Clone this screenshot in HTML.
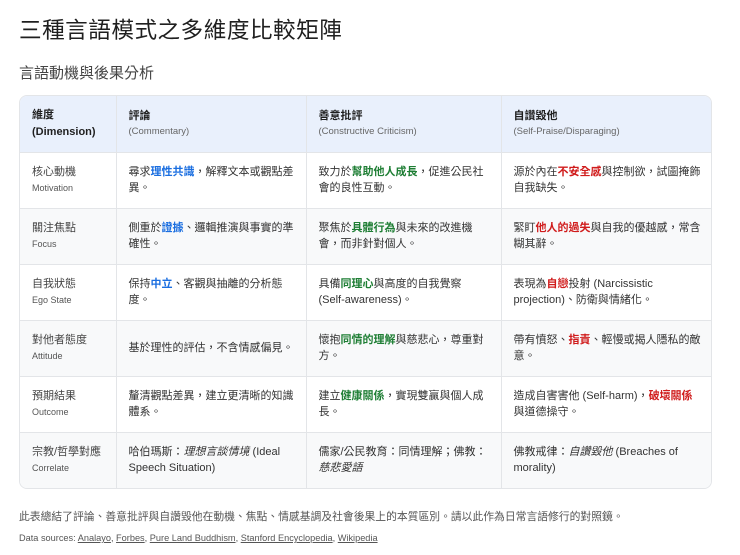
<!DOCTYPE html>
<html><head><meta charset="utf-8"><style>
*{margin:0;padding:0;box-sizing:border-box}
body{width:740px;height:555px;background:#fff;font-family:"Liberation Sans","Noto Sans CJK TC",sans-serif;color:#1f1f1f;position:relative;overflow:hidden}
h1{position:absolute;left:19px;top:12px;font-size:22.6px;font-weight:400;color:#1f1f1f;letter-spacing:0.5px}
h2{position:absolute;left:19px;top:62px;font-size:15px;font-weight:400;color:#444}
.tbl{position:absolute;left:19px;top:95px;width:693px;border:1px solid #e3e5e8;border-radius:8px;overflow:hidden}
table{border-collapse:collapse;width:100%;table-layout:fixed}
td,th{border-right:1px solid #e3e5e8;border-bottom:1px solid #e3e5e8;vertical-align:middle;padding:0 10px 0 12px;font-size:11px;line-height:16px;text-align:left}
tr td:last-child,tr th:last-child{border-right:none}
tr:last-child td{border-bottom:none}
th{background:#e9f0fc;height:56px;font-weight:700;color:#1f1f1f}
th small{display:block;font-weight:400;color:#666;font-size:9.5px;line-height:16px}
th:first-child{font-size:11px;line-height:17px}
td{height:56px;color:#333}
td:first-child{color:#444;font-size:11px;padding-right:2px}
td:first-child small{display:block;font-size:9px;color:#555;line-height:16px}
tr.g td{background:#f8f9fa}
.b{color:#1a6ee0;font-weight:700}
.gr{color:#1e7e34;font-weight:700}
.r{color:#d01c1c;font-weight:700}
.f1{position:absolute;left:19px;top:508px;font-size:10.8px;color:#555}
.f2{position:absolute;left:19px;top:533px;font-size:9.2px;color:#555}
.f2 u{text-decoration:underline}
</style></head><body>
<h1>三種言語模式之多維度比較矩陣</h1>
<h2>言語動機與後果分析</h2>
<div class="tbl"><table>
<colgroup><col style="width:96px"><col style="width:190px"><col style="width:195px"><col></colgroup>
<tr><th>維度<br>(Dimension)</th><th>評論<small>(Commentary)</small></th><th>善意批評<small>(Constructive Criticism)</small></th><th>自讚毀他<small>(Self-Praise/Disparaging)</small></th></tr>
<tr><td>核心動機<small>Motivation</small></td><td>尋求<span class="b">理性共識</span>，解釋文本或觀點差異。</td><td>致力於<span class="gr">幫助他人成長</span>，促進公民社會的良性互動。</td><td>源於內在<span class="r">不安全感</span>與控制欲，試圖掩飾自我缺失。</td></tr>
<tr class="g"><td>關注焦點<small>Focus</small></td><td>側重於<span class="b">證據</span>、邏輯推演與事實的準確性。</td><td>聚焦於<span class="gr">具體行為</span>與未來的改進機會，而非針對個人。</td><td>緊盯<span class="r">他人的過失</span>與自我的優越感，常含糊其辭。</td></tr>
<tr><td>自我狀態<small>Ego State</small></td><td>保持<span class="b">中立</span>、客觀與抽離的分析態度。</td><td>具備<span class="gr">同理心</span>與高度的自我覺察 (Self-awareness)。</td><td>表現為<span class="r">自戀</span>投射 (Narcissistic projection)、防衛與情緒化。</td></tr>
<tr class="g"><td>對他者態度<small>Attitude</small></td><td>基於理性的評估，不含情感偏見。</td><td>懷抱<span class="gr">同情的理解</span>與慈悲心，尊重對方。</td><td>帶有憤怒、<span class="r">指責</span>、輕慢或揭人隱私的敵意。</td></tr>
<tr><td>預期結果<small>Outcome</small></td><td>釐清觀點差異，建立更清晰的知識體系。</td><td>建立<span class="gr">健康關係</span>，實現雙贏與個人成長。</td><td>造成自害害他 (Self-harm)，<span class="r">破壞關係</span>與道德操守。</td></tr>
<tr class="g"><td>宗教/哲學對應<small>Correlate</small></td><td>哈伯瑪斯：<i>理想言談情境</i> (Ideal Speech Situation)</td><td>儒家/公民教育：同情理解；佛教：<i>慈悲愛語</i></td><td>佛教戒律：<i>自讚毀他</i> (Breaches of morality)</td></tr>
</table></div>
<div class="f1">此表總結了評論、善意批評與自讚毀他在動機、焦點、情感基調及社會後果上的本質區別。請以此作為日常言語修行的對照鏡。</div>
<div class="f2">Data sources: <u>Analayo</u>, <u>Forbes</u>, <u>Pure Land Buddhism</u>, <u>Stanford Encyclopedia</u>, <u>Wikipedia</u></div>
</body></html>
